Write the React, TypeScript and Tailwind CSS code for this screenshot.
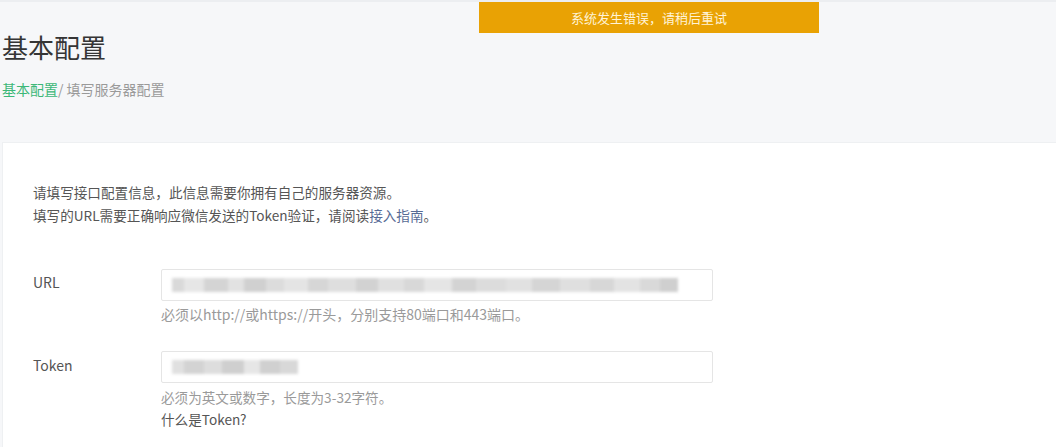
const FONT = { fontFamily: '"Microsoft YaHei", "Noto Sans CJK SC", "Noto Sans", sans-serif' }

const URL_BLOCKS = [
  { w: 12, c: '#d9d9d9' }, { w: 20, c: '#e6e6e6' }, { w: 24, c: '#d4d4d4' }, { w: 16, c: '#e2e2e2' },
  { w: 22, c: '#d0d0d0' }, { w: 18, c: '#dcdcdc' }, { w: 24, c: '#e4e4e4' }, { w: 20, c: '#d6d6d6' },
  { w: 28, c: '#dedede' }, { w: 22, c: '#d2d2d2' }, { w: 26, c: '#e0e0e0' }, { w: 20, c: '#d8d8d8' },
  { w: 28, c: '#e5e5e5' }, { w: 24, c: '#d3d3d3' }, { w: 30, c: '#dcdcdc' }, { w: 26, c: '#e1e1e1' },
  { w: 28, c: '#d5d5d5' }, { w: 30, c: '#dfdfdf' }, { w: 24, c: '#d7d7d7' }, { w: 26, c: '#e3e3e3' },
  { w: 20, c: '#d9d9d9' }, { w: 18, c: '#cfcfcf' },
]

const TOKEN_BLOCKS = [
  { w: 12, c: '#e0e0e0' }, { w: 20, c: '#d3d3d3' }, { w: 18, c: '#dddddd' }, { w: 22, c: '#cfcfcf' },
  { w: 16, c: '#e6e6e6' }, { w: 20, c: '#d0d0d0' }, { w: 18, c: '#d8d8d8' },
]

function BlurredValue({ blocks }: { blocks: { w: number; c: string }[] }) {
  return (
    <div className="flex items-center h-[14px] blur-[1.5px] overflow-hidden">
      {blocks.map((b, i) => (
        <div key={i} className="h-full shrink-0" style={{ width: b.w, backgroundColor: b.c }} />
      ))}
    </div>
  )
}

export default function App() {
  return (
    <div className="w-[1056px] h-[447px] overflow-hidden bg-[#f6f7f9] flex flex-col text-[#353535]" style={FONT}>
      <div className="h-[2px] bg-[#eceef1] shrink-0" />

      <div className="relative h-[140px] shrink-0 px-[2px]">
        <div className="absolute left-[479px] top-0 w-[340px] h-[31px] bg-[#e9a204] flex items-center justify-center text-[13px] text-[#fff3d6]">
          系统发生错误，请稍后重试
        </div>
        <h1 className="pt-[27px] text-[26px] leading-[36px] text-[#353535] font-normal">基本配置</h1>
        <div className="mt-[14px] text-[14px] leading-[20px]">
          <span className="text-[#3cb878]">基本配置</span>
          <span className="text-[#9a9a9a]">/ 填写服务器配置</span>
        </div>
      </div>

      <div className="flex-1 ml-[2px] bg-white border-l border-t border-[#eef0f2] pl-[30px] pt-[38px]">
        <div className="text-[13.6px] leading-[23px] text-[#555]">
          <p>请填写接口配置信息，此信息需要你拥有自己的服务器资源。</p>
          <p>
            填写的URL需要正确响应微信发送的Token验证，请阅读<span className="text-[#576b95]">接入指南</span>。
          </p>
        </div>

        <div className="mt-[42px] flex">
          <label className="w-[128px] pt-[3px] text-[14px] leading-[20px] text-[#555]">URL</label>
          <div>
            <div className="w-[552px] h-[32px] border border-[#e5e5e5] rounded-[2px] flex items-center px-[10px] overflow-hidden">
              <BlurredValue blocks={URL_BLOCKS} />
            </div>
            <p className="mt-[3px] text-[14px] leading-[20px] text-[#9a9a9a]">
              必须以http://或https://开头，分别支持80端口和443端口。
            </p>
          </div>
        </div>

        <div className="mt-[27px] flex">
          <label className="w-[128px] pt-[4px] text-[14px] leading-[20px] text-[#555]">Token</label>
          <div>
            <div className="w-[552px] h-[32px] border border-[#e5e5e5] rounded-[2px] flex items-center px-[10px]">
              <BlurredValue blocks={TOKEN_BLOCKS} />
            </div>
            <p className="mt-[3px] text-[13.6px] leading-[22px] text-[#9a9a9a]">必须为英文或数字，长度为3-32字符。</p>
            <p className="text-[13.6px] leading-[22px] text-[#555]">什么是Token?</p>
          </div>
        </div>
      </div>
    </div>
  )
}
